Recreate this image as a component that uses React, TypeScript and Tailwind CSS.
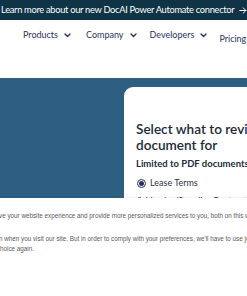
import React from "react";

const Chevron = () => (
  <svg width="7" height="5" viewBox="0 0 7 5" fill="none" className="ml-[6px] mt-[1px]">
    <path d="M1 1L3.5 3.5L6 1" stroke="#2b3160" strokeWidth="1.4" strokeLinecap="round" strokeLinejoin="round" />
  </svg>
);

export default function App() {
  return (
    <div className="w-[247px] h-[296px] overflow-hidden bg-white relative" style={{ fontFamily: "Lato, 'Noto Sans', sans-serif" }}>
      {/* banner */}
      <div className="h-[20px] bg-[#0e3446] flex items-center pl-[1px] whitespace-nowrap text-white text-[9.3px] tracking-[-0.3px]">
        <span>Learn more about our new DocAI Power Automate connector</span>
        <svg width="10" height="9" viewBox="0 0 10 9" fill="none" className="ml-[5px]">
          <path d="M1 4.5H9M5.5 1L9 4.5L5.5 8" stroke="white" strokeWidth="1.3" strokeLinecap="round" strokeLinejoin="round" />
        </svg>
      </div>
      {/* nav */}
      <div className="h-[58px] flex items-start pl-[23px] pt-[9px] whitespace-nowrap text-[9px] leading-[12px] text-[#2b3160]">
        <div className="flex items-center">Products<Chevron /></div>
        <div className="flex items-center ml-[15px]">Company<Chevron /></div>
        <div className="flex items-center ml-[13px]">Developers<Chevron /></div>
        <div className="ml-[12px] mt-[4px]">Pricing</div>
      </div>
      {/* hero */}
      <div className="h-[120px] bg-[#2c5f82] pt-[9px] pl-[124px]">
        <div className="h-[140px] bg-white rounded-tl-[9px] pl-[12px] pt-[34px] whitespace-nowrap">
          <div className="text-[13.6px] leading-[16px] text-[#1d2b38] font-semibold">Select what to review</div>
          <div className="text-[13.6px] leading-[16px] text-[#1d2b38] font-semibold">document for</div>
          <div className="mt-[4px] text-[9.5px] leading-[14px] font-bold text-[#1d2b38]">Limited to PDF documents</div>
          <div className="mt-[6px] flex items-center text-[9px] leading-[12px] text-[#2a3440]">
            <span className="w-[9px] h-[9px] rounded-full border border-[#2b3160] flex items-center justify-center mr-[4px] ml-[1px]">
              <span className="w-[5px] h-[5px] rounded-full bg-[#2b3160]" />
            </span>
            Lease Terms
          </div>
          <div className="mt-[6px] flex items-center text-[9px] leading-[12px] text-[#2a3440]">
            <span className="w-[9px] h-[9px] rounded-full border border-[#555] mr-[4px] ml-[1px]" />
            Vendor/Supplier Contract
          </div>
        </div>
      </div>
      {/* cookie panel */}
      <div className="relative bg-white h-[98px] shadow-[0_-1px_2px_rgba(0,0,0,0.06)] pt-[13px] whitespace-nowrap text-[6.3px] leading-[10px] text-[#5a5a5a]" style={{ fontFamily: "'Liberation Sans', Arial, sans-serif" }}>
        <p className="ml-[-1px]">ve your website experience and provide more personalized services to you, both on this website and through</p>
        <p className="h-[10px]"></p>
        <p className="mt-[3px] ml-[-1px]">n when you visit our site. But in order to comply with your preferences, we'll have to use just one tiny</p>
        <p>hoice again.</p>
      </div>
    </div>
  );
}
